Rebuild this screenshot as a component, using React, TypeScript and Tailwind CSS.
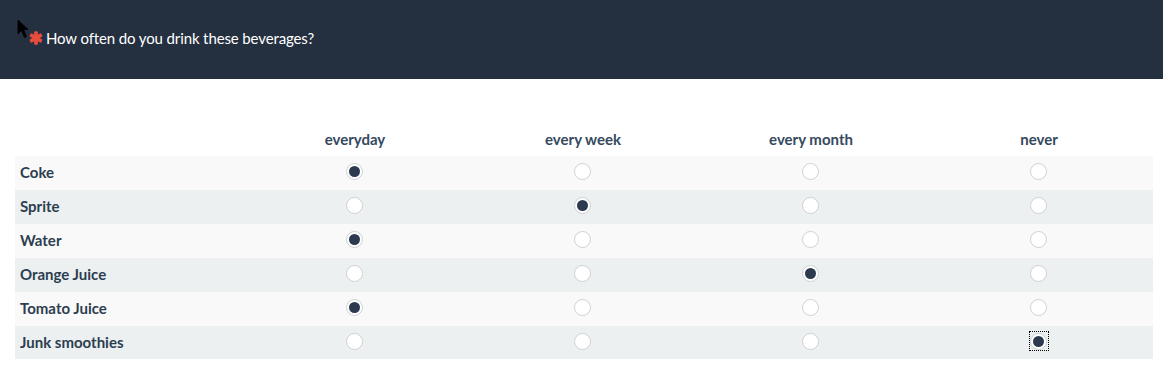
import React, { useState } from 'react';

const columns = ['everyday', 'every week', 'every month', 'never'];

const initialRows = [
  { label: 'Coke', value: 0 },
  { label: 'Sprite', value: 1 },
  { label: 'Water', value: 0 },
  { label: 'Orange Juice', value: 2 },
  { label: 'Tomato Juice', value: 0 },
  { label: 'Junk smoothies', value: 3 },
];

const Asterisk = () => (
  <svg width="14" height="14" viewBox="0 0 14 14" className="shrink-0">
    <g fill="#e74c3c">
      <rect x="5.1" y="0.3" width="3.8" height="13.4" rx="1" />
      <rect x="5.1" y="0.3" width="3.8" height="13.4" rx="1" transform="rotate(60 7 7)" />
      <rect x="5.1" y="0.3" width="3.8" height="13.4" rx="1" transform="rotate(120 7 7)" />
      <circle cx="7" cy="7" r="3.6" />
    </g>
  </svg>
);

const Radio: React.FC<{ checked: boolean; focused?: boolean; onClick: () => void }> = ({ checked, focused, onClick }) => (
  <button
    type="button"
    onClick={onClick}
    className={`flex items-center justify-center w-[18px] h-[18px] ${focused ? 'outline-1 outline-dotted outline-black' : ''}`}
  >
    <span className="flex items-center justify-center w-[17px] h-[17px] rounded-full bg-white border border-[#cdd1d4]">
      {checked && <span className="w-[11px] h-[11px] rounded-full bg-[#2c3a4f]" />}
    </span>
  </button>
);

export default function App() {
  const [rows, setRows] = useState(initialRows);

  const select = (i: number, v: number) => {
    setRows(rows.map((r, idx) => (idx === i ? { ...r, value: v } : r)));
  };

  return (
    <div className="w-[1163px] h-[392px] bg-white" style={{ fontFamily: 'Lato, "Open Sans", sans-serif' }}>
      <div className="relative h-[79px] bg-[#24303f] flex items-center pb-[4px] pl-[29px]">
        <svg className="absolute left-[17px] top-[19px]" width="13" height="21" viewBox="0 0 13 21">
          <path d="M1 1 L1 15 L4.5 11.5 L7.5 18.5 L9.5 17.5 L6.5 10.5 L11 10.5 Z" fill="#000" stroke="#000" strokeWidth="0.8" />
        </svg>
        <Asterisk />
        <span className="ml-[3px] text-white text-[15px] leading-[18px] tracking-[-0.12px]">How often do you drink these beverages?</span>
      </div>

      <div className="pl-[15px] pr-[10px] pt-[43px]">
        <div className="grid grid-cols-[226px_repeat(4,228px)] h-[34px] items-center">
          <div />
          {columns.map((c) => (
            <div key={c} className="text-center font-bold text-[15px] text-[#34495e]">
              {c}
            </div>
          ))}
        </div>
        {rows.map((r, i) => (
          <div
            key={r.label}
            className={`grid grid-cols-[226px_repeat(4,228px)] items-center ${i === 5 ? 'h-[33px]' : 'h-[34px]'} ${i % 2 === 0 ? 'bg-[#f9f9f9]' : 'bg-[#ecf0f1]'}`}
          >
            <div className="pl-[5px] pb-[1px] font-bold text-[15px] text-[#2c3e50]">{r.label}</div>
            {columns.map((c, j) => (
              <div key={c} className="flex justify-center pb-[3px] pr-[1px]">
                <Radio checked={r.value === j} focused={i === 5 && j === 3} onClick={() => select(i, j)} />
              </div>
            ))}
          </div>
        ))}
      </div>
    </div>
  );
}
